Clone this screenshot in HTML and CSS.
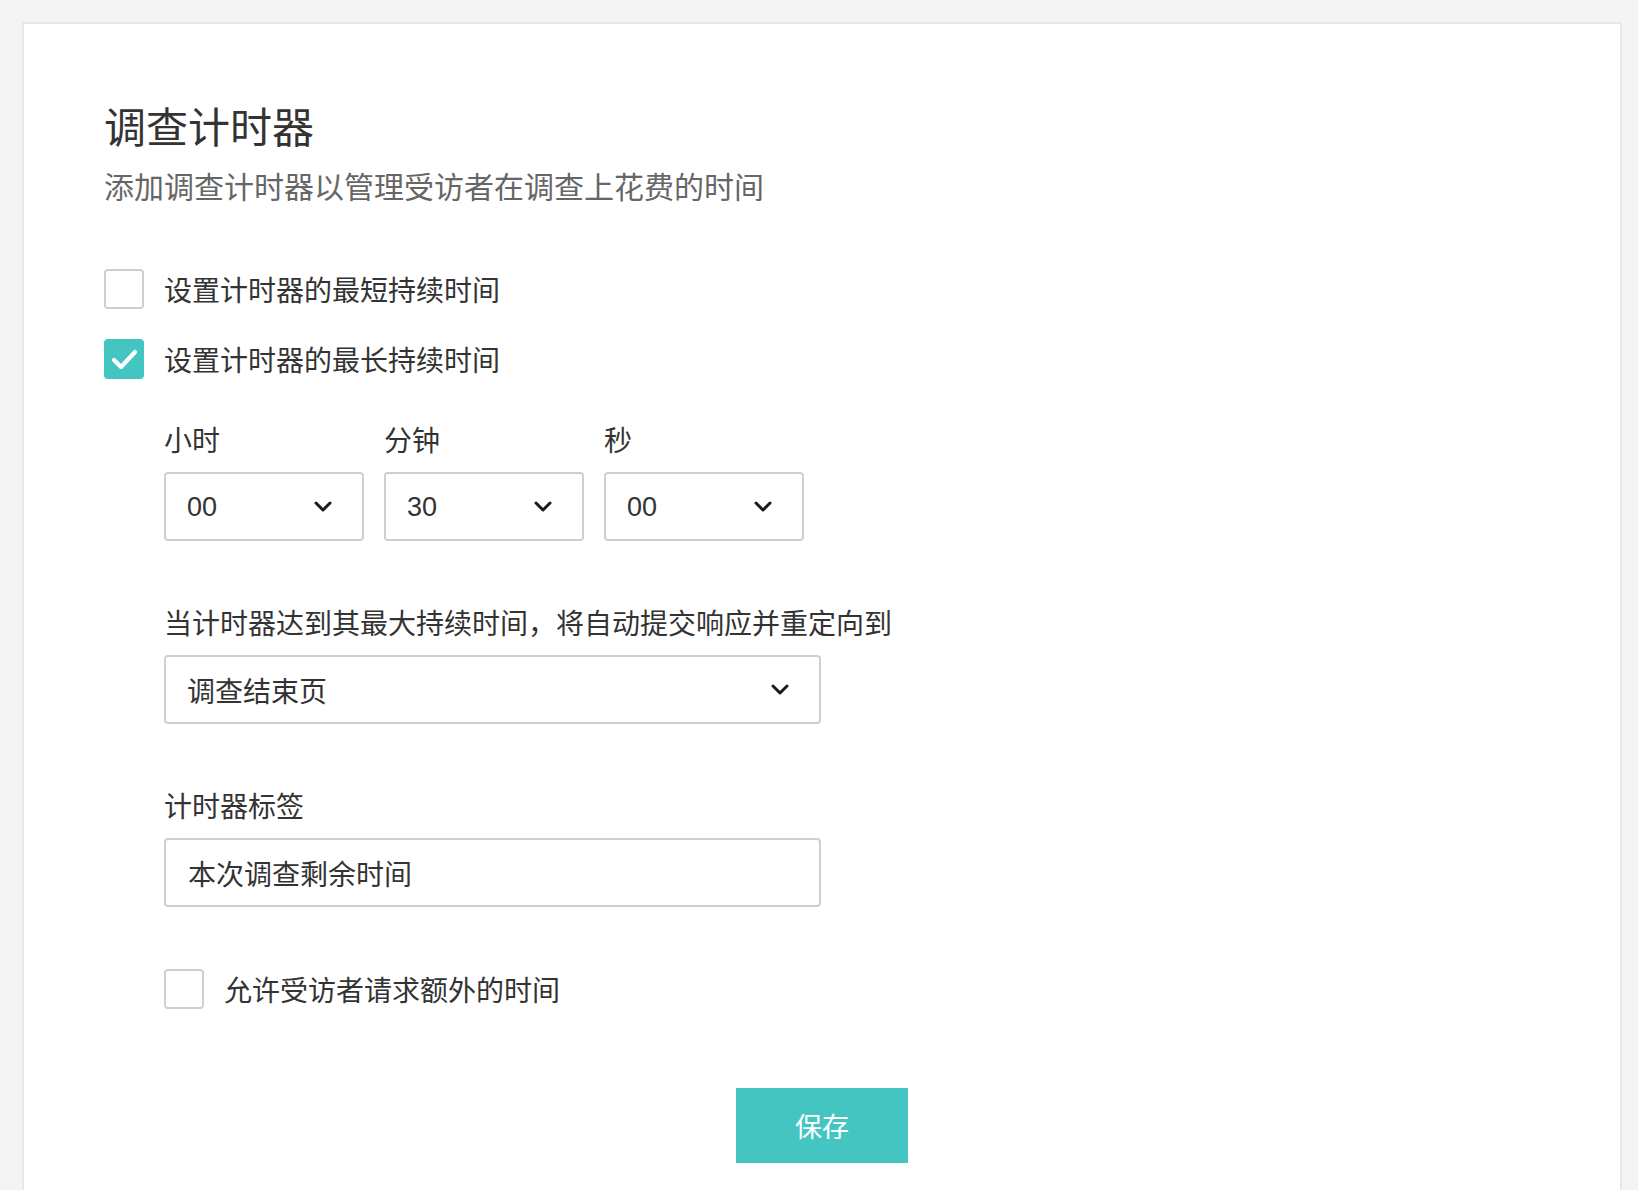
FILE: index.html
```html
<!DOCTYPE html>
<html lang="zh-CN">
<head>
<meta charset="utf-8">
<title>调查计时器</title>
<link rel="stylesheet" href="styles.css">
</head>
<body>
<div class="card">
  <h1 class="title">调查计时器</h1>
  <p class="subtitle">添加调查计时器以管理受访者在调查上花费的时间</p>

  <label class="check-row first">
    <span class="box"></span>
    <span class="check-label">设置计时器的最短持续时间</span>
  </label>
  <label class="check-row second">
    <span class="box checked">
      <svg width="40" height="40" viewBox="0 0 40 40"><polyline points="10,21 17,28 31,13" fill="none" stroke="#fff" stroke-width="4.2" stroke-linecap="round" stroke-linejoin="round"/></svg>
    </span>
    <span class="check-label">设置计时器的最长持续时间</span>
  </label>

  <div class="sub">
    <div class="time-row">
      <div class="field">
        <div class="label">小时</div>
        <div class="select small"><span class="value num">00</span>
          <svg class="chev" width="18" height="11" viewBox="0 0 18 11"><polyline points="2,2 9,9 16,2" fill="none" stroke="#1a1a1a" stroke-width="3" stroke-linecap="round" stroke-linejoin="round"/></svg>
        </div>
      </div>
      <div class="field">
        <div class="label">分钟</div>
        <div class="select small"><span class="value num">30</span>
          <svg class="chev" width="18" height="11" viewBox="0 0 18 11"><polyline points="2,2 9,9 16,2" fill="none" stroke="#1a1a1a" stroke-width="3" stroke-linecap="round" stroke-linejoin="round"/></svg>
        </div>
      </div>
      <div class="field">
        <div class="label">秒</div>
        <div class="select small"><span class="value num">00</span>
          <svg class="chev" width="18" height="11" viewBox="0 0 18 11"><polyline points="2,2 9,9 16,2" fill="none" stroke="#1a1a1a" stroke-width="3" stroke-linecap="round" stroke-linejoin="round"/></svg>
        </div>
      </div>
    </div>

    <div class="label redirect-label">当计时器达到其最大持续时间，将自动提交响应并重定向到</div>
    <div class="select wide"><span class="value">调查结束页</span>
      <svg class="chev" width="18" height="11" viewBox="0 0 18 11"><polyline points="2,2 9,9 16,2" fill="none" stroke="#1a1a1a" stroke-width="3" stroke-linecap="round" stroke-linejoin="round"/></svg>
    </div>

    <div class="label timer-label">计时器标签</div>
    <input class="text-input" type="text" value="本次调查剩余时间">

    <label class="check-row third">
      <span class="box"></span>
      <span class="check-label">允许受访者请求额外的时间</span>
    </label>
  </div>

  <div class="actions">
    <button class="save" type="button">保存</button>
  </div>
</div>
</body>
</html>
```

FILE: styles.css
```css
html, body {
  margin: 0;
  padding: 0;
  background: #f4f4f4;
}

body {
  font-family: "Noto Sans CJK SC", "Liberation Sans", sans-serif;
  color: #333;
  padding: 22px 0 0 22px;
}

.card {
  box-sizing: border-box;
  width: 1600px;
  background: #fff;
  border: 2px solid #e8e8e8;
  padding: 77px 80px 120px 80px;
}

.title {
  margin: 0;
  font-size: 42px;
  line-height: 48px;
  font-weight: 400;
  color: #333;
}

.subtitle {
  margin: 18px 0 0;
  font-size: 30px;
  line-height: 36px;
  color: #666;
}

.check-row {
  display: flex;
  align-items: center;
  gap: 20px;
  height: 40px;
}

.check-row.first { margin-top: 66px; }
.check-row.second { margin-top: 30px; }
.check-row.third { margin-top: 62px; }

.box {
  box-sizing: border-box;
  width: 40px;
  height: 40px;
  border: 2px solid #cfcfcf;
  border-radius: 4px;
  background: #fff;
  flex: none;
  display: block;
}

.box.checked {
  border-color: #45c5c2;
  background: #45c5c2;
  position: relative;
}

.box.checked svg {
  position: absolute;
  left: -2px;
  top: -2px;
}

.check-label {
  font-size: 28px;
  line-height: 34px;
  color: #333;
}

.sub {
  padding-left: 60px;
}

.time-row {
  display: flex;
  gap: 20px;
  margin-top: 43px;
}

.label {
  font-size: 28px;
  line-height: 34px;
  color: #333;
}

.select {
  box-sizing: border-box;
  height: 69px;
  border: 2px solid #cfcfcf;
  border-radius: 4px;
  background: #fff;
  display: flex;
  align-items: center;
  justify-content: space-between;
  padding: 0 30px 0 21px;
  margin-top: 16px;
}

.select.small { width: 200px; }
.select.wide { width: 657px; }

.value {
  font-size: 28px;
  line-height: 34px;
  color: #333;
}

.value.num {
  font-family: "Liberation Sans", "Noto Sans CJK SC", sans-serif;
  font-size: 27px;
}

.chev { display: block; }

.redirect-label { margin-top: 64px; }
.timer-label { margin-top: 64px; }

.text-input {
  display: block;
  box-sizing: border-box;
  width: 657px;
  height: 69px;
  margin-top: 16px;
  border: 2px solid #cfcfcf;
  border-radius: 4px;
  padding: 0 22px;
  font-family: "Noto Sans CJK SC", "Liberation Sans", sans-serif;
  font-size: 28px;
  color: #333;
  background: #fff;
  outline: none;
}

.actions {
  display: flex;
  justify-content: center;
  margin-top: 79px;
}

.save {
  width: 172px;
  height: 75px;
  border: none;
  border-radius: 0;
  background: #45c5c2;
  color: #fff;
  font-family: "Noto Sans CJK SC", "Liberation Sans", sans-serif;
  font-size: 27px;
  cursor: pointer;
}
```
